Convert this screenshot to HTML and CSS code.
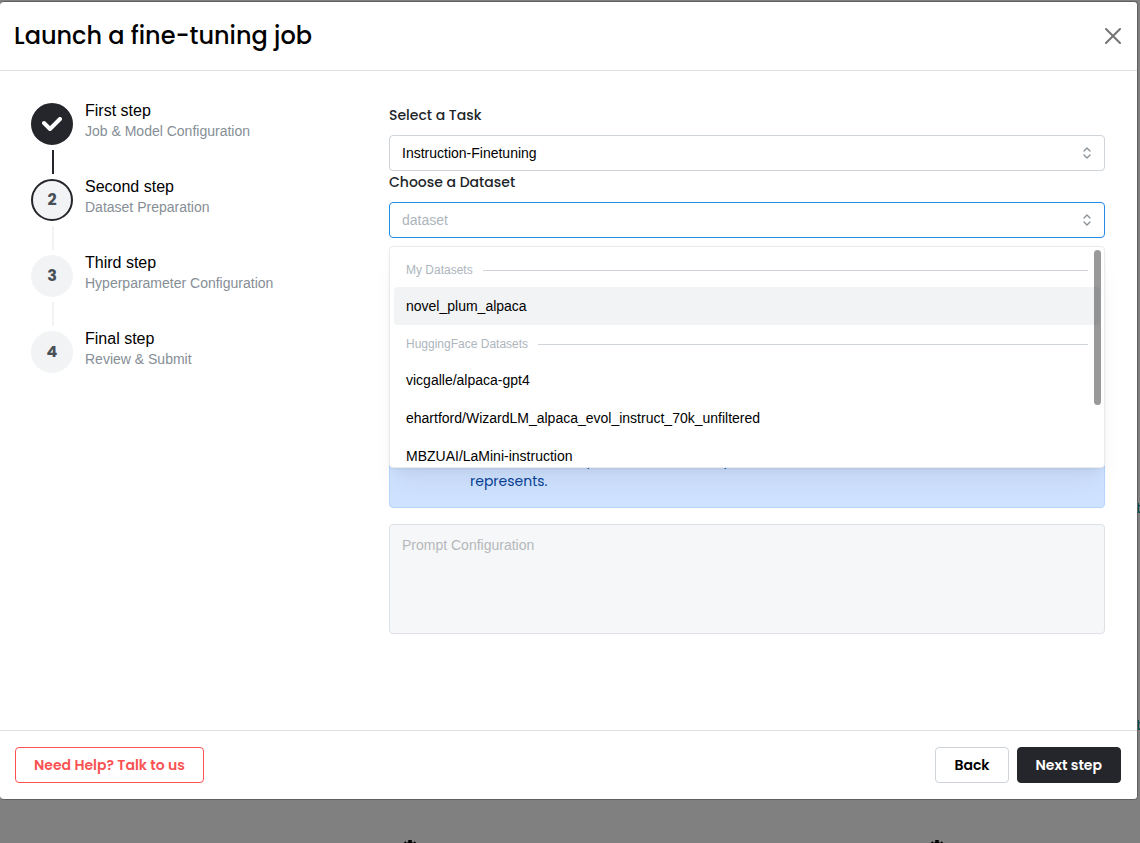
FILE: index.html
```html
<!DOCTYPE html>
<html lang="en">
<head>
<meta charset="utf-8">
<title>Launch a fine-tuning job</title>
<meta name="viewport" content="width=device-width, initial-scale=1">
<link rel="stylesheet" href="styles.css">
</head>
<body>
<div class="backdrop" aria-hidden="true">
  <span class="peek peek-upper">t</span>
  <span class="peek peek-lower">t</span>
  <svg class="gear gear-left" viewBox="0 0 16 16"><path d="M6 0h4v2.500l2 .5 1-1.500 2 1.500-1 2.500L16 6.500v3h-2.500L8 14 2.500 9.500H0v-3l2-1-1-2.500 2-1.500 1 1.500 2-.5z"/></svg>
  <svg class="gear gear-right" viewBox="0 0 16 16"><path d="M6 0h4v2.500l2 .5 1-1.500 2 1.500-1 2.500L16 6.500v3h-2.500L8 14 2.500 9.500H0v-3l2-1-1-2.500 2-1.500 1 1.500 2-.5z"/></svg>
</div>
<main class="modal" role="dialog" aria-labelledby="title">
  <header class="modal-header">
    <h1 class="modal-title" id="title">Launch a fine-tuning job</h1>
    <button class="close" type="button" aria-label="Close">
      <svg width="16" height="16" viewBox="0 0 16 16" fill="none" stroke="#757575" stroke-width="2" stroke-linecap="round"><path d="M1 1l14 14M15 1L1 15"/></svg>
    </button>
  </header>

  <div class="modal-body">
    <ol class="steps">
      <li class="step">
        <div class="step-rail">
          <span class="step-icon done"><svg width="20" height="14" viewBox="0 0 20 14" fill="none" stroke="#fff" stroke-width="4" stroke-linecap="round" stroke-linejoin="round"><path d="M2 6l6 6L18 2"/></svg></span>
          <span class="step-line active"></span>
        </div>
        <div class="step-text"><div class="step-name">First step</div><div class="step-note">Job &amp; Model Configuration</div></div>
      </li>
      <li class="step">
        <div class="step-rail"><span class="step-icon current">2</span><span class="step-line"></span></div>
        <div class="step-text"><div class="step-name">Second step</div><div class="step-note">Dataset Preparation</div></div>
      </li>
      <li class="step">
        <div class="step-rail"><span class="step-icon">3</span><span class="step-line"></span></div>
        <div class="step-text"><div class="step-name">Third step</div><div class="step-note">Hyperparameter Configuration</div></div>
      </li>
      <li class="step">
        <div class="step-rail"><span class="step-icon">4</span></div>
        <div class="step-text"><div class="step-name">Final step</div><div class="step-note">Review &amp; Submit</div></div>
      </li>
    </ol>

    <form class="form">
      <div class="fields">
        <label class="label" for="task">Select a Task</label>
        <div class="control">
          <select class="input" id="task"><option>Instruction-Finetuning</option></select>
          <svg class="chevrons" viewBox="0 0 8 12" fill="none" stroke="#868e96" stroke-width="1.300" stroke-linecap="round" stroke-linejoin="round"><path d="M1 4l3-3 3 3M1 8l3 3 3-3"/></svg>
        </div>
        <label class="label" for="dataset">Choose a Dataset</label>
        <div class="control">
          <input class="input focused" id="dataset" type="text" placeholder="dataset" role="combobox" aria-expanded="true" aria-controls="dataset-list">
          <svg class="chevrons" viewBox="0 0 8 12" fill="none" stroke="#868e96" stroke-width="1.300" stroke-linecap="round" stroke-linejoin="round"><path d="M1 4l3-3 3 3M1 8l3 3 3-3"/></svg>
          <div class="dropdown" id="dataset-list" role="listbox">
            <div class="group">My Datasets</div>
            <div class="option hovered" role="option">novel_plum_alpaca</div>
            <div class="group">HuggingFace Datasets</div>
            <div class="option" role="option">vicgalle/alpaca-gpt4</div>
            <div class="option" role="option">ehartford/WizardLM_alpaca_evol_instruct_70k_unfiltered</div>
            <div class="option" role="option">MBZUAI/LaMini-instruction</div>
            <span class="thumb"></span>
          </div>
        </div>
      </div>
      <p class="notice">where a value is put and what each param<br>represents.</p>
      <textarea class="prompt" placeholder="Prompt Configuration" aria-label="Prompt Configuration" disabled></textarea>
    </form>
  </div>

  <footer class="modal-footer">
    <button class="button help" type="button">Need Help? Talk to us</button>
    <div class="actions">
      <button class="button" type="button">Back</button>
      <button class="button primary" type="button">Next step</button>
    </div>
  </footer>
</main>
</body>
</html>
```
FILE: styles.css
```css
* { box-sizing: border-box; }

body {
  margin: 0;
  min-height: 100vh;
  overflow: hidden;
  background: #808080;
  color: #000;
  font-family: "Liberation Sans", Arial, sans-serif;
  font-size: 14px;
}

.backdrop { position: fixed; inset: 0; }
.peek {
  position: absolute;
  left: 1136px;
  color: #044f4c;
  font: 700 14px/20px "Liberation Sans", Arial, sans-serif;
}
.peek-upper { top: 498px; }
.peek-lower { top: 715px; }
.gear { position: absolute; top: 840px; width: 14px; height: 14px; }
.gear-left { left: 403px; }
.gear-right { left: 930px; }

.modal {
  position: relative;
  margin: 1px 2px 0 0;
  background: #fff;
  border: 1px solid #5f5f5f;
  border-left: 0;
  border-radius: 4px;
}

.modal-header {
  display: flex;
  align-items: center;
  justify-content: space-between;
  height: 69px;
  padding: 0 16px 0 14px;
  border-bottom: 1px solid #dee2e6;
}
.modal-title {
  margin: 0;
  font: 500 24px/32px Poppins, Inter, sans-serif;
}
.close {
  display: flex;
  padding: 0;
  border: 0;
  background: none;
}

.modal-body {
  display: grid;
  grid-template-columns: 1fr 2fr;
  min-height: 659px;
  padding: 29px 32px 32px 31px;
}

.steps { margin: 0; padding: 0; list-style: none; }
.step { display: flex; gap: 12px; height: 76px; }
.step-rail {
  display: flex;
  flex-direction: column;
  align-items: center;
  padding-top: 3px;
}
.step-icon {
  display: flex;
  flex: none;
  align-items: center;
  justify-content: center;
  width: 42px;
  height: 42px;
  border: 2px solid #f1f3f5;
  border-radius: 50%;
  background: #f1f3f5;
  color: #495057;
  font: 700 16px/20px Poppins, Inter, sans-serif;
}
.step-icon.current { border-color: #25262b; }
.step-icon.done { border-color: #25262b; background: #25262b; }
.step-line {
  flex: none;
  width: 2px;
  height: 24px;
  margin-top: 5px;
  margin-left: 2px;
  background: #f1f3f5;
}
.step-line.active { background: #25262b; }
.step-name { font-size: 16px; line-height: 21px; }
.step-note { color: #868e96; line-height: 21px; }

.form { padding-top: 4px; }
.fields { min-height: 306px; }
.label {
  display: block;
  margin-bottom: 8px;
  color: #212529;
  font: 500 14px/23px Poppins, Inter, sans-serif;
}
.control { position: relative; }
.input {
  display: block;
  width: 100%;
  height: 36px;
  padding: 0 12px;
  border: 1px solid #ced4da;
  border-radius: 4px;
  outline: 0;
  background: #fff;
  color: #000;
  font: inherit;
  appearance: none;
}
.input.focused { border-color: #228be6; }
.input::placeholder { color: #adb5bd; }
.chevrons {
  position: absolute;
  top: 12px;
  right: 14px;
  width: 8px;
  height: 12px;
}

.dropdown {
  position: absolute;
  z-index: 1;
  top: 44px;
  left: 0;
  right: 0;
  height: 222px;
  padding: 4px;
  overflow: hidden;
  border: 1px solid #e9ecef;
  border-radius: 4px;
  background: #fff;
  box-shadow: 0 1px 3px rgba(0, 0, 0, .05), 0 20px 25px -5px rgba(0, 0, 0, .05), 0 10px 10px -5px rgba(0, 0, 0, .04);
}
.group {
  display: flex;
  align-items: center;
  gap: 10px;
  padding: 10px 12px 8px;
  color: #adb5bd;
  font-size: 12px;
  line-height: 18px;
}
.group::after { content: ""; flex: 1; height: 1px; background: #ced4da; }
.option { padding: 8px 12px; border-radius: 4px; line-height: 22px; }
.option.hovered { background: #f1f3f5; }
.thumb {
  position: absolute;
  top: 3px;
  right: 3px;
  width: 7px;
  height: 155px;
  border-radius: 4px;
  background: rgba(0, 0, 0, .4);
}

.notice {
  margin: 0 0 16px;
  padding: 39px 80px 15px;
  border: 1px solid #b6d4fe;
  border-radius: 4px;
  background: #cfe2ff;
  color: #084298;
  font: 400 14px/21px Poppins, Inter, sans-serif;
}
.prompt {
  display: block;
  width: 100%;
  height: 110px;
  padding: 12px;
  border: 1px solid #dee2e6;
  border-radius: 4px;
  background: #f6f7f9;
  font: inherit;
  resize: none;
}
.prompt::placeholder { color: #b5b8bb; }

.modal-footer {
  display: flex;
  align-items: center;
  justify-content: space-between;
  padding: 16px 16px 16px 15px;
  border-top: 1px solid #dee2e6;
}
.actions { display: flex; gap: 8px; }
.button {
  height: 36px;
  padding: 0 18px;
  border: 1px solid #ced4da;
  border-radius: 4px;
  background: #fff;
  color: #000;
  font: 600 14px/20px Poppins, Inter, sans-serif;
}
.button.help { border-color: #fa5252; color: #fa5252; }
.button.primary { border-color: #25262b; background: #25262b; color: #fff; }
```
